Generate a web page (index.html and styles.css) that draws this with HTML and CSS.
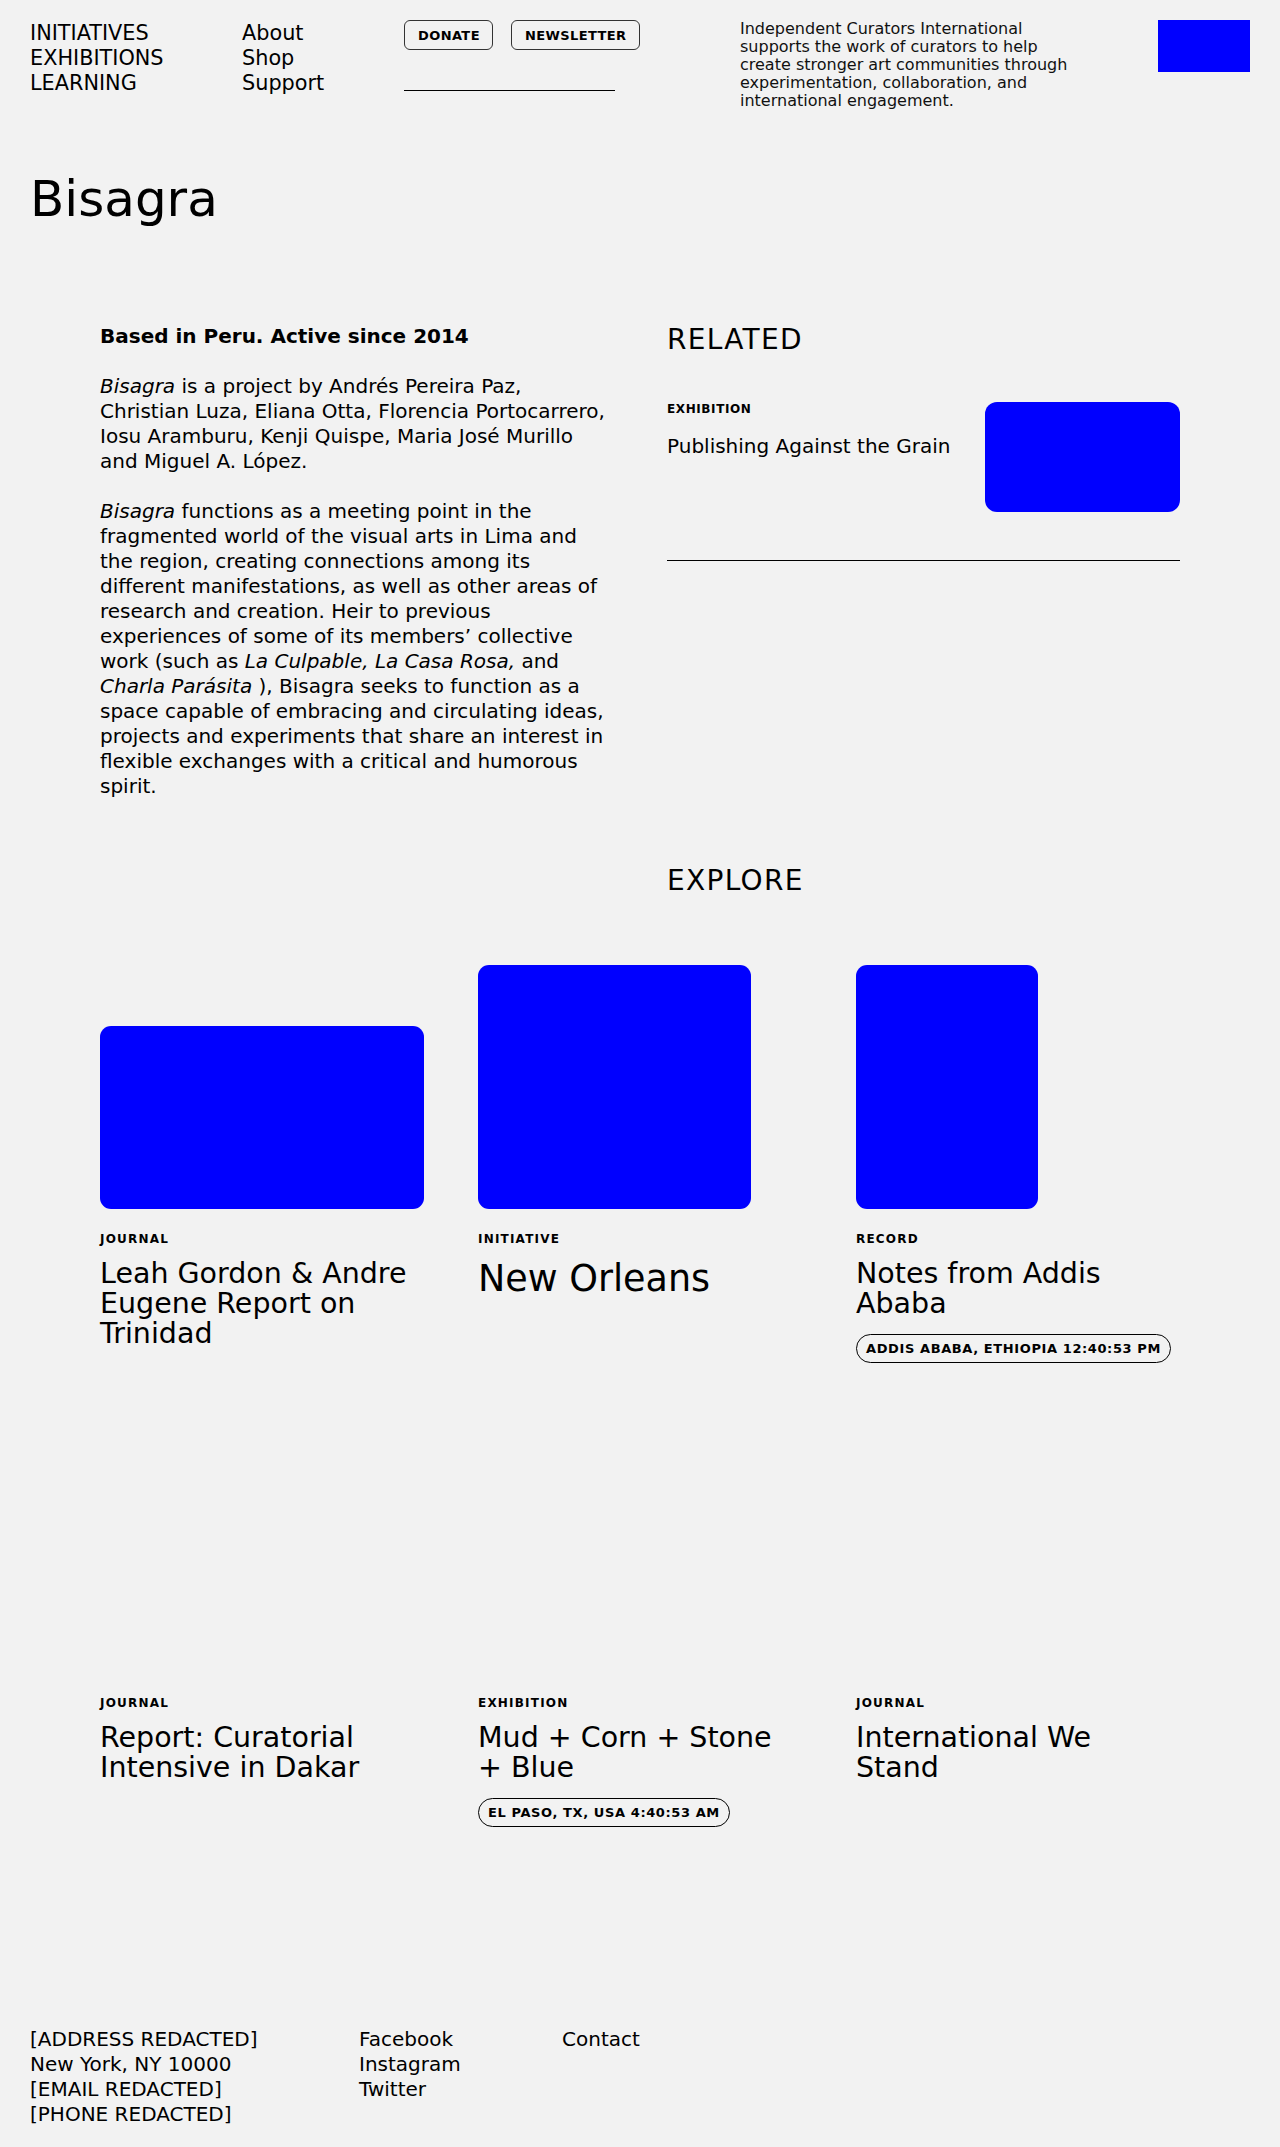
FILE: index.html
```html
<!DOCTYPE html>
<html lang="en">
<head>
<meta charset="utf-8">
<title>Bisagra</title>
<link rel="stylesheet" href="styles.css">
</head>
<body>
<header class="site-header">
  <nav class="nav-primary">
    <a href="#">INITIATIVES</a>
    <a href="#">EXHIBITIONS</a>
    <a href="#">LEARNING</a>
  </nav>
  <nav class="nav-secondary">
    <a href="#">About</a>
    <a href="#">Shop</a>
    <a href="#">Support</a>
  </nav>
  <div class="actions">
    <div class="buttons">
      <a class="btn" href="#">DONATE</a>
      <a class="btn" href="#">NEWSLETTER</a>
    </div>
    <div class="search-line"></div>
  </div>
  <p class="mission">Independent Curators International supports the work of curators to help create stronger art communities through experimentation, collaboration, and international engagement.</p>
  <div class="logo"></div>
</header>

<h1 class="page-title">Bisagra</h1>

<main class="content">
  <section class="intro">
    <div class="bio">
      <p class="bio-lead">Based in Peru. Active since 2014</p>
      <p><em>Bisagra</em> is a project by Andrés Pereira Paz, Christian Luza, Eliana Otta, Florencia Portocarrero, Iosu Aramburu, Kenji Quispe, Maria José Murillo and Miguel A. López.</p>
      <p><em>Bisagra</em> functions as a meeting point in the fragmented world of the visual arts in Lima and the region, creating connections among its different manifestations, as well as other areas of research and creation. Heir to previous experiences of some of its members’ collective work (such as <em>La Culpable, La Casa Rosa,</em> and <em>Charla Parásita</em> ), Bisagra seeks to function as a space capable of embracing and circulating ideas, projects and experiments that share an interest in flexible exchanges with a critical and humorous spirit.</p>
    </div>
    <aside class="related">
      <h2 class="section-heading">RELATED</h2>
      <div class="related-item">
        <div class="related-text">
          <div class="label label-sm">EXHIBITION</div>
          <div class="related-title">Publishing Against the Grain</div>
        </div>
        <div class="related-img"></div>
      </div>
    </aside>
  </section>

  <section class="explore">
    <div class="explore-head">
      <h2 class="section-heading">EXPLORE</h2>
    </div>
    <div class="cards">
      <article class="card">
        <div class="card-media"><div class="media media-wide"></div></div>
        <div class="label">JOURNAL</div>
        <h3 class="card-title">Leah Gordon &amp; Andre Eugene Report on Trinidad</h3>
      </article>
      <article class="card">
        <div class="card-media"><div class="media media-square"></div></div>
        <div class="label">INITIATIVE</div>
        <h3 class="card-title card-title-lg">New Orleans</h3>
      </article>
      <article class="card">
        <div class="card-media"><div class="media media-tall"></div></div>
        <div class="label">RECORD</div>
        <h3 class="card-title">Notes from Addis Ababa</h3>
        <span class="pill">ADDIS ABABA, ETHIOPIA 12:40:53 PM</span>
      </article>
      <article class="card">
        <div class="card-media"></div>
        <div class="label">JOURNAL</div>
        <h3 class="card-title">Report: Curatorial Intensive in Dakar</h3>
      </article>
      <article class="card">
        <div class="card-media"></div>
        <div class="label">EXHIBITION</div>
        <h3 class="card-title">Mud + Corn + Stone + Blue</h3>
        <span class="pill">EL PASO, TX, USA 4:40:53 AM</span>
      </article>
      <article class="card">
        <div class="card-media"></div>
        <div class="label">JOURNAL</div>
        <h3 class="card-title">International We Stand</h3>
      </article>
    </div>
  </section>
</main>

<footer class="site-footer">
  <div class="footer-col footer-address">
    <span>[ADDRESS REDACTED]</span>
    <span>New York, NY 10000</span>
    <span>[EMAIL REDACTED]</span>
    <span>[PHONE REDACTED]</span>
  </div>
  <div class="footer-col footer-social">
    <a href="#">Facebook</a>
    <a href="#">Instagram</a>
    <a href="#">Twitter</a>
  </div>
  <div class="footer-col">
    <a href="#">Contact</a>
  </div>
</footer>
</body>
</html>
```

FILE: styles.css
```css
* { box-sizing: border-box; }

html, body {
  margin: 0;
  padding: 0;
  background: #f2f2f2;
}

body {
  font-family: "DejaVu Sans", "Liberation Sans", sans-serif;
  font-size: 20px;
  line-height: 25px;
  color: #000;
}

a { color: inherit; text-decoration: none; }

/* Header */
.site-header {
  display: flex;
  align-items: flex-start;
  padding: 20px 30px 0 30px;
}

.nav-primary,
.nav-secondary {
  display: flex;
  flex-direction: column;
  padding-top: 1px;
  font-size: 20.8px;
}

.nav-primary { width: 212px; }
.nav-secondary { width: 162px; }

.actions {
  width: 336px;
  display: flex;
  flex-direction: column;
}

.buttons {
  display: flex;
  gap: 18px;
}

.btn {
  display: inline-flex;
  align-items: center;
  justify-content: center;
  height: 30px;
  padding: 0 12px 0 13px;
  border: 1px solid #333;
  border-radius: 6px;
  font-size: 13px;
  font-weight: bold;
  letter-spacing: 0.4px;
  line-height: 1;
}

.search-line {
  margin-top: 40px;
  width: 211px;
  border-top: 1px solid #000;
}

.mission {
  margin: 0;
  width: 335px;
  font-size: 16px;
  line-height: 18px;
  color: #111;
}

.logo {
  margin-left: auto;
  width: 92px;
  height: 52px;
  background: #0000ff;
}

/* Title */
.page-title {
  margin: 59px 0 0;
  padding-left: 30px;
  font-size: 50px;
  line-height: 60px;
  font-weight: normal;
}

/* Main */
.content {
  padding: 0 100px;
}

.intro {
  margin-top: 95px;
  display: grid;
  grid-template-columns: 1fr 1fr;
  column-gap: 54px;
  align-items: start;
}

.bio { max-width: 509px; }

.bio p {
  margin: 0 0 25px;
}

.bio p:last-child { margin-bottom: 0; }

.bio-lead { font-weight: bold; }

.section-heading {
  margin: 0;
  font-size: 28px;
  line-height: 32px;
  font-weight: normal;
  letter-spacing: 1.3px;
}

.related-item {
  margin-top: 46px;
  display: flex;
  justify-content: space-between;
  align-items: flex-start;
  padding-bottom: 48px;
  border-bottom: 1px solid #000;
}

.label {
  font-size: 12px;
  line-height: 15px;
  font-weight: bold;
  letter-spacing: 1.2px;
}

.label-sm { letter-spacing: 0.6px; }

.related-title {
  margin-top: 17px;
}

.related-img {
  width: 195px;
  height: 110px;
  border-radius: 12px;
  background: #0000ff;
}

/* Explore */
.explore {
  margin-top: 66px;
}

.explore-head {
  display: grid;
  grid-template-columns: 1fr 1fr;
  column-gap: 54px;
}

.explore-head .section-heading { grid-column: 2; }

.cards {
  margin-top: 68px;
  display: grid;
  grid-template-columns: repeat(3, 1fr);
  column-gap: 54px;
  row-gap: 66px;
  align-items: start;
}

.card {
  display: flex;
  flex-direction: column;
  align-items: flex-start;
}

.card-media {
  height: 244px;
  width: 100%;
  display: flex;
  align-items: flex-end;
}

.media {
  background: #0000ff;
  border-radius: 11px;
}

.media-wide { width: 324px; height: 183px; }
.media-square { width: 273px; height: 244px; }
.media-tall { width: 182px; height: 244px; }

.card .label { margin-top: 23px; }

.card-title {
  margin: 12px 0 0;
  max-width: 316px;
  font-size: 28.5px;
  line-height: 30px;
  font-weight: normal;
}

.card-title-lg {
  font-size: 36.5px;
  line-height: 39px;
}

.pill {
  margin-top: 15px;
  display: inline-flex;
  align-items: center;
  height: 29px;
  padding: 0 9px;
  border: 1px solid #000;
  border-radius: 999px;
  font-size: 13px;
  font-weight: bold;
  letter-spacing: 0.6px;
  line-height: 1;
}

/* Footer */
.site-footer {
  margin-top: 200px;
  display: flex;
  padding: 0 30px 20px;
}

.footer-col {
  display: flex;
  flex-direction: column;
}

.footer-address { width: 329px; }
.footer-social { width: 203px; }
```
